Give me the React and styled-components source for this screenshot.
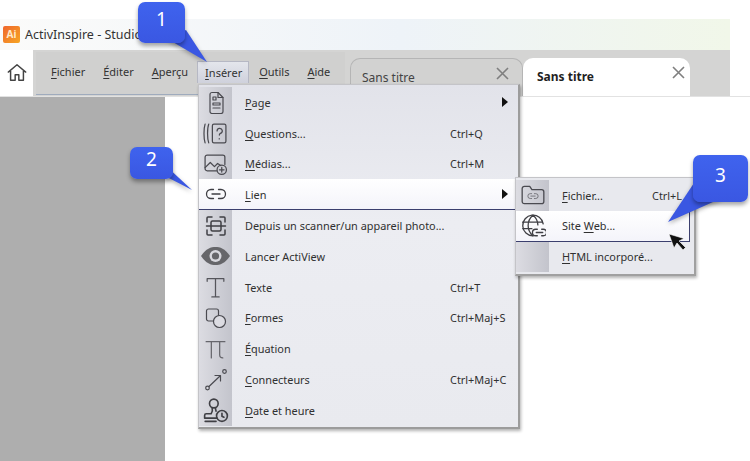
import React from 'react';
import styled, { createGlobalStyle } from 'styled-components';

const GlobalStyle = createGlobalStyle`
  html, body { margin: 0; padding: 0; background: #fff; }
  body { font-family: "Noto Sans", "Open Sans", sans-serif; color: #2b2b2b; }
`;

const Page = styled.div`
  position: relative;
  width: 750px;
  height: 461px;
  overflow: hidden;
  background: #fff;
  padding-top: 19px;
  box-sizing: border-box;
`;

const TitleBar = styled.div`
  width: 730px;
  height: 31px;
  display: flex;
  align-items: center;
  gap: 5px;
  padding-left: 3px;
  box-sizing: border-box;
  background: linear-gradient(90deg, #fbfbfa 0%, #eef3f8 55%, #f1f7e9 100%);
  font-size: 12.5px;
  color: #333;
`;

const AppLogo = styled.div`
  width: 17px;
  height: 17px;
  border-radius: 2px;
  background: linear-gradient(135deg, #f0662d, #f6a623);
  color: #ffe9c8;
  font-size: 10px;
  font-weight: 700;
  line-height: 17px;
  text-align: center;
`;

const ToolRow = styled.div`
  width: 730px;
  height: 46px;
  display: flex;
  background: #d4d4d3;
`;

const HomeCell = styled.div`
  width: 33px;
  background: #fff;
  display: flex;
  align-items: center;
  justify-content: center;
  margin-right: 3px;
`;

const MenuBar = styled.div`
  width: 309px;
  margin-top: 2px;
  height: 43px;
  box-sizing: border-box;
  display: flex;
  align-items: center;
  padding: 0 0 3px 15px;
  background: #d0d0cf;
  border-bottom: 1px solid #9fabbd;
  font-size: 11px;
`;

const MenuLabel = styled.span`
  margin-right: ${(p) => p.$gap}px;
  color: #333;
  ${(p) => p.$active && `
    margin-left: -9px;
    padding: 3px 6px 3px 7px;
    background: linear-gradient(180deg, #e4e6ec, #cfd1dc);
    border: 1px solid #b6b8c4;
    border-bottom: none;
  `}
  u { text-underline-offset: 2px; text-decoration-thickness: 1px; }
`;

const Tabs = styled.div`
  display: flex;
  align-items: flex-end;
  margin-left: 5px;
  padding-top: 7px;
  height: 46px;
  box-sizing: border-box;
`;

const Tab = styled.div`
  position: relative;
  width: ${(p) => p.$width}px;
  height: 38px;
  box-sizing: border-box;
  padding: 10px 0 0 ${(p) => (p.$active ? 14 : 11)}px;
  font-size: 12px;
  font-weight: ${(p) => (p.$active ? 700 : 400)};
  color: ${(p) => (p.$active ? '#1f1f1f' : '#444')};
  background: ${(p) => (p.$active ? '#fff' : '#d2d2d1')};
  border-radius: 10px 10px 0 0;
  ${(p) => !p.$active && 'border: 1px solid #b5b5b5; border-bottom: none;'}
`;

const TabClose = styled.svg`
  position: absolute;
  top: 8px;
  right: ${(p) => p.$right}px;
  width: 13px;
  height: 13px;
`;

const Workspace = styled.div`
  display: flex;
  height: 365px;
  border-top: 1px solid #e2e2e2;
`;

const SidePanel = styled.div`
  width: 165px;
  background: #aeaeae;
`;

const Dropdown = styled.div`
  position: absolute;
  left: 198px;
  top: 84px;
  width: 322px;
  padding: 2px 0 1px;
  box-sizing: border-box;
  background: linear-gradient(180deg, #e2e3ea 0%, #ecedf2 40%, #e9eaef 100%);
  border: 1px solid #c4c4c8;
  border-right: 2px solid #9c9c9c;
  border-bottom: 2px solid #9c9c9c;
  box-shadow: 1px 2px 3px rgba(0, 0, 0, 0.3);
  z-index: 2;
`;

const Row = styled.div`
  display: flex;
  align-items: center;
  height: ${(p) => p.$height || 30.8}px;
  font-size: 10.9px;
  color: #303030;
  ${(p) => p.$hover && `
    background: linear-gradient(180deg, #ffffff, #f4f4fa);
    border-bottom: 1px solid #3b3f6e;
    box-sizing: border-box;
  `}
  u { text-underline-offset: 2px; text-decoration-thickness: 1px; }
`;

const Gutter = styled.div`
  flex: none;
  width: ${(p) => p.$width || 33}px;
  align-self: stretch;
  display: flex;
  align-items: center;
  justify-content: center;
  background: ${(p) => (p.$clear ? 'transparent' : 'linear-gradient(90deg, #dcdce2, #c3c4cc)')};
`;

const RowLabel = styled.span`
  flex: 1;
  padding-left: 13px;
  white-space: nowrap;
`;

const Shortcut = styled.span`
  width: ${(p) => p.$width || 68}px;
  white-space: nowrap;
`;

const Arrow = styled.span`
  flex: none;
  width: 0;
  height: 0;
  margin-right: 10px;
  border-left: 6px solid #111;
  border-top: 5px solid transparent;
  border-bottom: 5px solid transparent;
`;

const Submenu = styled.div`
  position: absolute;
  left: 515px;
  top: 177px;
  width: 181px;
  padding: 2px 0;
  box-sizing: border-box;
  background: #e8e9ee;
  border: 1px solid #c4c4c8;
  border-right: 2px solid #a0a0a0;
  border-bottom: 2px solid #a0a0a0;
  box-shadow: 1px 2px 3px rgba(0, 0, 0, 0.3);
  z-index: 3;
`;

const SubHover = styled(Row)`
  margin-right: 4px;
  border-right: 1px solid #3b3f6e;
`;

const CalloutBox = styled.div`
  position: absolute;
  left: ${(p) => p.$x}px;
  top: ${(p) => p.$y}px;
  width: ${(p) => p.$w}px;
  height: ${(p) => p.$h}px;
  border-radius: 7px;
  background: linear-gradient(180deg, #3f63ee, #3a57e2);
  color: #fff;
  font-size: 19px;
  line-height: ${(p) => p.$h - 7}px;
  text-align: center;
  box-shadow: 0 3px 4px rgba(0, 0, 0, 0.35);
  z-index: 6;
`;

const Tail = styled.svg`
  position: absolute;
  left: 0;
  top: 0;
  width: 750px;
  height: 461px;
  pointer-events: none;
  z-index: 5;
  filter: drop-shadow(0 2px 2px rgba(0, 0, 0, 0.3));
`;

const Cursor = styled.svg`
  position: absolute;
  left: 668px;
  top: 233px;
  width: 19px;
  height: 19px;
  z-index: 7;
`;

const Ico = ({ children, w = 24, h = 24, sw = 1.2, c = '#4a4a50' }) => (
  <svg width={w} height={h} viewBox="0 0 24 24" fill="none" stroke={c} strokeWidth={sw} strokeLinecap="round" strokeLinejoin="round">
    {children}
  </svg>
);

const LinkGlyph = () => (
  <>
    <path d="M9.5 7.5H7a4.5 4.5 0 0 0 0 9h2.5" />
    <path d="M14.5 7.5H17a4.5 4.5 0 0 1 0 9h-2.5" />
    <path d="M8 12h8" />
  </>
);

const icons = {
  page: (
    <Ico>
      <path d="M6 4.5a2 2 0 0 1 2-2h6l5 5v14a2 2 0 0 1-2 2H8a2 2 0 0 1-2-2z" />
      <path d="M14 2.5v5h5M9 7h3v3H9zM9 13h7v2H9zM9 18h7" />
    </Ico>
  ),
  questions: (
    <Ico w={25} h={25}>
      <rect x="9" y="3" width="13" height="18" rx="1.5" />
      <path d="M13.5 9.5a2.5 2.5 0 1 1 3.2 2.4c-.6.3-1 .7-1 1.6M15.6 17v.2" />
      <path d="M5.5 3C4 7 4 17 5.5 21M2 3C.6 7 .6 17 2 21" />
    </Ico>
  ),
  media: (
    <Ico w={25} h={25}>
      <path d="M13 19H4a2 2 0 0 1-2-2V6a2 2 0 0 1 2-2h15a2 2 0 0 1 2 2v7" />
      <path d="M2 16l5-5 4 4 3-3 3 2" />
      <circle cx="18" cy="18" r="4.5" />
      <path d="M18 15.8v4.4M15.8 18h4.4" />
    </Ico>
  ),
  link: <Ico sw={1.3} c="#3f3f44"><LinkGlyph /></Ico>,
  scanner: (
    <Ico sw={1.5} c="#3f3f44">
      <path d="M3 8V4a1 1 0 0 1 1-1h4M16 3h4a1 1 0 0 1 1 1v4M21 16v4a1 1 0 0 1-1 1h-4M8 21H4a1 1 0 0 1-1-1v-4" />
      <rect x="7" y="7" width="10" height="10" rx="1.5" />
      <path d="M2.5 12h19" />
    </Ico>
  ),
  eye: (
    <svg width="31" height="24" viewBox="0 0 31 24">
      <path d="M1 12C6 4.500 11 3 15.500 3S25 4.500 30 12c-5 7.500-10 9-14.500 9S6 19.500 1 12z" fill="#66666a" />
      <circle cx="15.500" cy="12" r="6" fill="#d8d8de" />
      <circle cx="15.500" cy="12" r="3.600" fill="#66666a" />
    </svg>
  ),
  text: (
    <Ico w={25} h={25} c="#55555b">
      <path d="M4 6V3.500h16V6M12 3.500v17.500M8.500 21h7" />
    </Ico>
  ),
  shapes: (
    <Ico>
      <rect x="2.500" y="3" width="12" height="12" rx="2" />
      <circle cx="15.500" cy="15.500" r="6" fill="#dcdce2" />
    </Ico>
  ),
  pi: (
    <Ico w={25} h={25} c="#66666c">
      <path d="M3 5.500h18M8 5.500V21M16 5.500V18a3 3 0 0 0 3 3" />
    </Ico>
  ),
  connector: (
    <Ico>
      <circle cx="3.500" cy="20" r="1.800" />
      <circle cx="20.500" cy="3.500" r="1.800" />
      <path d="M5 18.500L16 8M11 7.500h5.500V13" />
    </Ico>
  ),
  stamp: (
    <Ico w={26} h={26} c="#3f3f44" sw={1.5}>
      <circle cx="10" cy="6" r="4" />
      <path d="M8.500 10c.5 2 0 4-1 5.500H3a1.500 1.500 0 0 0-1.500 1.500v2.500H13M11.500 10c0 1 .2 2 .6 3" />
      <path d="M2 22.500h10" />
      <circle cx="17.500" cy="17.500" r="5" />
      <path d="M17.500 15v2.700l1.800 1" />
    </Ico>
  ),
  folder: (
    <Ico w={26} h={26}>
      <path d="M2 6a2 2 0 0 1 2-2h5l2 3h9a2 2 0 0 1 2 2v9a2 2 0 0 1-2 2H4a2 2 0 0 1-2-2z" />
      <g transform="translate(6 7) scale(.5)"><LinkGlyph /></g>
    </Ico>
  ),
  globe: (
    <Ico w={26} h={26} c="#3f3f44">
      <path d="M12 21a9.500 9.500 0 1 1 9.400-11" />
      <path d="M12 2c-6 5-6 14 0 19M12 2c3 2.500 4.500 6 4.500 9M2.500 8.500h18M2.500 14.500H11" />
      <path d="M16 15h-1.500a3 3 0 0 0 0 6H16M20 15h1.500a3 3 0 0 1 0 6H20M15 18h6" />
    </Ico>
  ),
};

const items = [
  { icon: 'page', label: <><u>P</u>age</>, arrow: true },
  { icon: 'questions', label: <><u>Q</u>uestions...</>, key: 'Ctrl+Q' },
  { icon: 'media', label: <><u>M</u>édias...</>, key: 'Ctrl+M' },
  { icon: 'link', label: <><u>L</u>ien</>, arrow: true, hover: true },
  { icon: 'scanner', label: 'Depuis un scanner/un appareil photo...' },
  { icon: 'eye', label: 'Lancer ActiView' },
  { icon: 'text', label: 'Texte', key: 'Ctrl+T' },
  { icon: 'shapes', label: <><u>F</u>ormes</>, key: 'Ctrl+Maj+S' },
  { icon: 'pi', label: <><u>É</u>quation</> },
  { icon: 'connector', label: <><u>C</u>onnecteurs</>, key: 'Ctrl+Maj+C' },
  { icon: 'stamp', label: <><u>D</u>ate et heure</> },
];

const menus = [
  { label: <><u>F</u>ichier</>, gap: 18 },
  { label: <><u>É</u>diter</>, gap: 18 },
  { label: <><u>A</u>perçu</>, gap: 18 },
  { label: <><u>I</u>nsérer</>, gap: 10, active: true },
  { label: <><u>O</u>utils</>, gap: 18 },
  { label: <><u>A</u>ide</>, gap: 0 },
];

const CloseX = ({ right }) => (
  <TabClose $right={right} viewBox="0 0 13 13" stroke="#7f7f7f" strokeWidth="1.6">
    <path d="M1 1l11 11M12 1L1 12" />
  </TabClose>
);

export default function App() {
  return (
    <Page>
      <GlobalStyle />
      <TitleBar>
        <AppLogo>Ai</AppLogo>
        <span>ActivInspire - Studio</span>
      </TitleBar>
      <ToolRow>
        <HomeCell>
          <Ico w={22} h={22} sw={1.6} c="#444">
            <path d="M2.500 11L12 3l9.500 8M5 9v11h5v-6h4v6h5V9" />
          </Ico>
        </HomeCell>
        <MenuBar>
          {menus.map((m, i) => (
            <MenuLabel key={i} $gap={m.gap} $active={m.active}>{m.label}</MenuLabel>
          ))}
        </MenuBar>
        <Tabs>
          <Tab $width={173}>
            Sans titre
            <CloseX right={13} />
          </Tab>
          <Tab $width={167} $active>
            Sans titre
            <CloseX right={5} />
          </Tab>
        </Tabs>
      </ToolRow>
      <Workspace>
        <SidePanel />
      </Workspace>

      <Dropdown>
        {items.map((it, i) => (
          <Row key={i} $hover={it.hover}>
            <Gutter $clear={it.hover}>{icons[it.icon]}</Gutter>
            <RowLabel>{it.label}</RowLabel>
            {it.key && <Shortcut>{it.key}</Shortcut>}
            {it.arrow && <Arrow />}
          </Row>
        ))}
      </Dropdown>

      <Submenu>
        <Row>
          <Gutter>{icons.folder}</Gutter>
          <RowLabel><u>F</u>ichier...</RowLabel>
          <Shortcut $width={42}>Ctrl+L</Shortcut>
        </Row>
        <SubHover $hover>
          <Gutter $clear>{icons.globe}</Gutter>
          <RowLabel>Site <u>W</u>eb...</RowLabel>
        </SubHover>
        <Row>
          <Gutter />
          <RowLabel><u>H</u>TML incorporé...</RowLabel>
        </Row>
      </Submenu>

      <Tail viewBox="0 0 750 461">
        <polygon points="166,38 186,30 207,62" fill="#3a57e2" />
        <polygon points="165,165 165,176 192,190" fill="#3a57e2" />
        <polygon points="696,180 722,198 668,222" fill="#3a57e2" />
      </Tail>
      <CalloutBox $x={138} $y={2} $w={47} $h={41}>1</CalloutBox>
      <CalloutBox $x={130} $y={147} $w={43} $h={32}>2</CalloutBox>
      <CalloutBox $x={693} $y={155} $w={55} $h={47}>3</CalloutBox>
      <Cursor viewBox="0 0 19 19">
        <path d="M1 1l5 14 3-5 6 7 2.500-2.500-6.500-6.500 5-2.500z" fill="#111" stroke="#fff" strokeWidth=".6" />
      </Cursor>
    </Page>
  );
}
